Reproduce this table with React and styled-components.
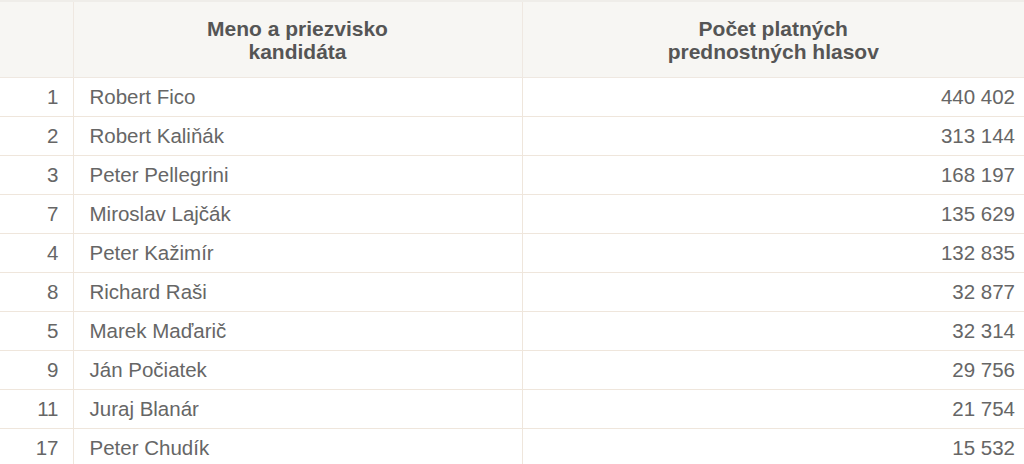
import React from 'react';
import styled, { createGlobalStyle } from 'styled-components';

const GlobalStyle = createGlobalStyle`
  body {
    margin: 0;
    background: #ffffff;
    font-family: "Liberation Sans", Arial, sans-serif;
  }
`;

const candidates = [
  { no: 1, name: 'Robert Fico', votes: '440 402' },
  { no: 2, name: 'Robert Kaliňák', votes: '313 144' },
  { no: 3, name: 'Peter Pellegrini', votes: '168 197' },
  { no: 7, name: 'Miroslav Lajčák', votes: '135 629' },
  { no: 4, name: 'Peter Kažimír', votes: '132 835' },
  { no: 8, name: 'Richard Raši', votes: '32 877' },
  { no: 5, name: 'Marek Maďarič', votes: '32 314' },
  { no: 9, name: 'Ján Počiatek', votes: '29 756' },
  { no: 11, name: 'Juraj Blanár', votes: '21 754' },
  { no: 17, name: 'Peter Chudík', votes: '15 532' },
];

function App() {
  return (
    <>
      <GlobalStyle />
      <Table>
        <colgroup>
          <col style={{ width: 73 }} />
          <col style={{ width: 449 }} />
          <col />
        </colgroup>
        <thead>
          <tr>
            <HeadCell />
            <HeadCell>Meno a priezvisko<br />kandidáta</HeadCell>
            <HeadCell>Počet platných<br />prednostných hlasov</HeadCell>
          </tr>
        </thead>
        <tbody>
          {candidates.map((c) => (
            <tr key={c.no}>
              <Cell $align="right" $pad="0 14px 0 0">{c.no}</Cell>
              <Cell $pad="0 0 0 16px">{c.name}</Cell>
              <Cell $align="right" $pad="0 9px 0 0">{c.votes}</Cell>
            </tr>
          ))}
        </tbody>
      </Table>
    </>
  );
}

export default App;

const Table = styled.table`
  width: 1024px;
  border-collapse: collapse;
  table-layout: fixed;
  border-top: 2px solid #efede9;
`;

const HeadCell = styled.th`
  height: 75px;
  padding: 0;
  background: #f7f6f3;
  color: #555555;
  font-size: 21px;
  font-weight: bold;
  line-height: 23px;
  text-align: center;
  vertical-align: middle;
  border-left: 1px solid #efe8e1;
  border-bottom: 1px solid #efe8e1;

  &:first-child {
    border-left: none;
  }
`;

const Cell = styled.td`
  height: 38px;
  padding: ${(p) => p.$pad};
  color: #666666;
  font-size: 20.5px;
  line-height: 22px;
  text-align: ${(p) => p.$align || 'left'};
  vertical-align: middle;
  border-left: 1px solid #efe6dc;
  border-bottom: 1px solid #efe6dc;

  &:first-child {
    border-left: none;
  }
`;
